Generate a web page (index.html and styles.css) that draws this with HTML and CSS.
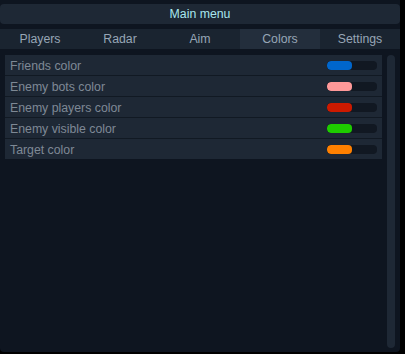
FILE: index.html
```html
<!DOCTYPE html>
<html lang="en">
  <head>
    <meta charset="UTF-8" />
    <title>Main menu</title>
    <link rel="stylesheet" href="styles.css">
  </head>
  <body>
    <div class="window">
      <div class="title-bar">Main menu</div>
      <div class="tabs">
        <div class="tab">Players</div>
        <div class="tab">Radar</div>
        <div class="tab">Aim</div>
        <div class="tab active">Colors</div>
        <div class="tab">Settings</div>
      </div>
      <div class="content">
        <div class="list">
          <div class="row">
            <span class="label">Friends color</span>
            <div class="track"><div class="fill blue"></div></div>
          </div>
          <div class="row">
            <span class="label">Enemy bots color</span>
            <div class="track"><div class="fill pink"></div></div>
          </div>
          <div class="row">
            <span class="label">Enemy players color</span>
            <div class="track"><div class="fill red"></div></div>
          </div>
          <div class="row">
            <span class="label">Enemy visible color</span>
            <div class="track"><div class="fill green"></div></div>
          </div>
          <div class="row">
            <span class="label">Target color</span>
            <div class="track"><div class="fill orange"></div></div>
          </div>
        </div>
        <div class="scrollbar"></div>
      </div>
    </div>
  </body>
</html>
```

FILE: styles.css
```css
body {
  margin: 0;
  padding: 0;
  background-color: #000000;
  font-family: "Liberation Sans", Arial, sans-serif;
  font-size: 12.3px;
}
.window {
  width: 400px;
  height: 352px;
  background-color: #0e1520;
  padding-top: 4px;
  box-sizing: border-box;
  display: flex;
  flex-direction: column;
  border-radius: 0 0 4px 4px;
}
.title-bar {
  height: 20px;
  line-height: 21px;
  background-color: #1e2835;
  border-radius: 4px;
  text-align: center;
  color: #a8e6ee;
}
.tabs {
  display: flex;
  margin-top: 5px;
  height: 20px;
  background-color: #1a2430;
}
.tab {
  width: 80px;
  line-height: 21px;
  text-align: center;
  color: #97a6b6;
}
.tab.active {
  background-color: #232e3c;
}
.content {
  flex: 1;
  display: flex;
  padding: 6px 5px 4px 5px;
  gap: 5px;
}
.list {
  flex: 1;
  align-self: flex-start;
}
.row {
  display: flex;
  align-items: center;
  justify-content: space-between;
  height: 20px;
  background-color: #1e2835;
  border-bottom: 1px solid #111923;
  padding: 0 5px 0 5px;
}
.row:last-child {
  border-bottom: none;
}
.label {
  color: #7e8995;
  padding-top: 1px;
}
.track {
  width: 50px;
  height: 9px;
  border-radius: 4px;
  background-color: #111822;
  overflow: hidden;
}
.fill {
  width: 25px;
  height: 100%;
  border-radius: 4px;
}
.blue { background-color: #0066cc; }
.pink { background-color: #ff9999; }
.red { background-color: #cc1a00; }
.green { background-color: #1ecc00; }
.orange { background-color: #ff8000; }
.scrollbar {
  width: 8px;
  background-color: #1e2835;
  border-radius: 4px;
}
```
